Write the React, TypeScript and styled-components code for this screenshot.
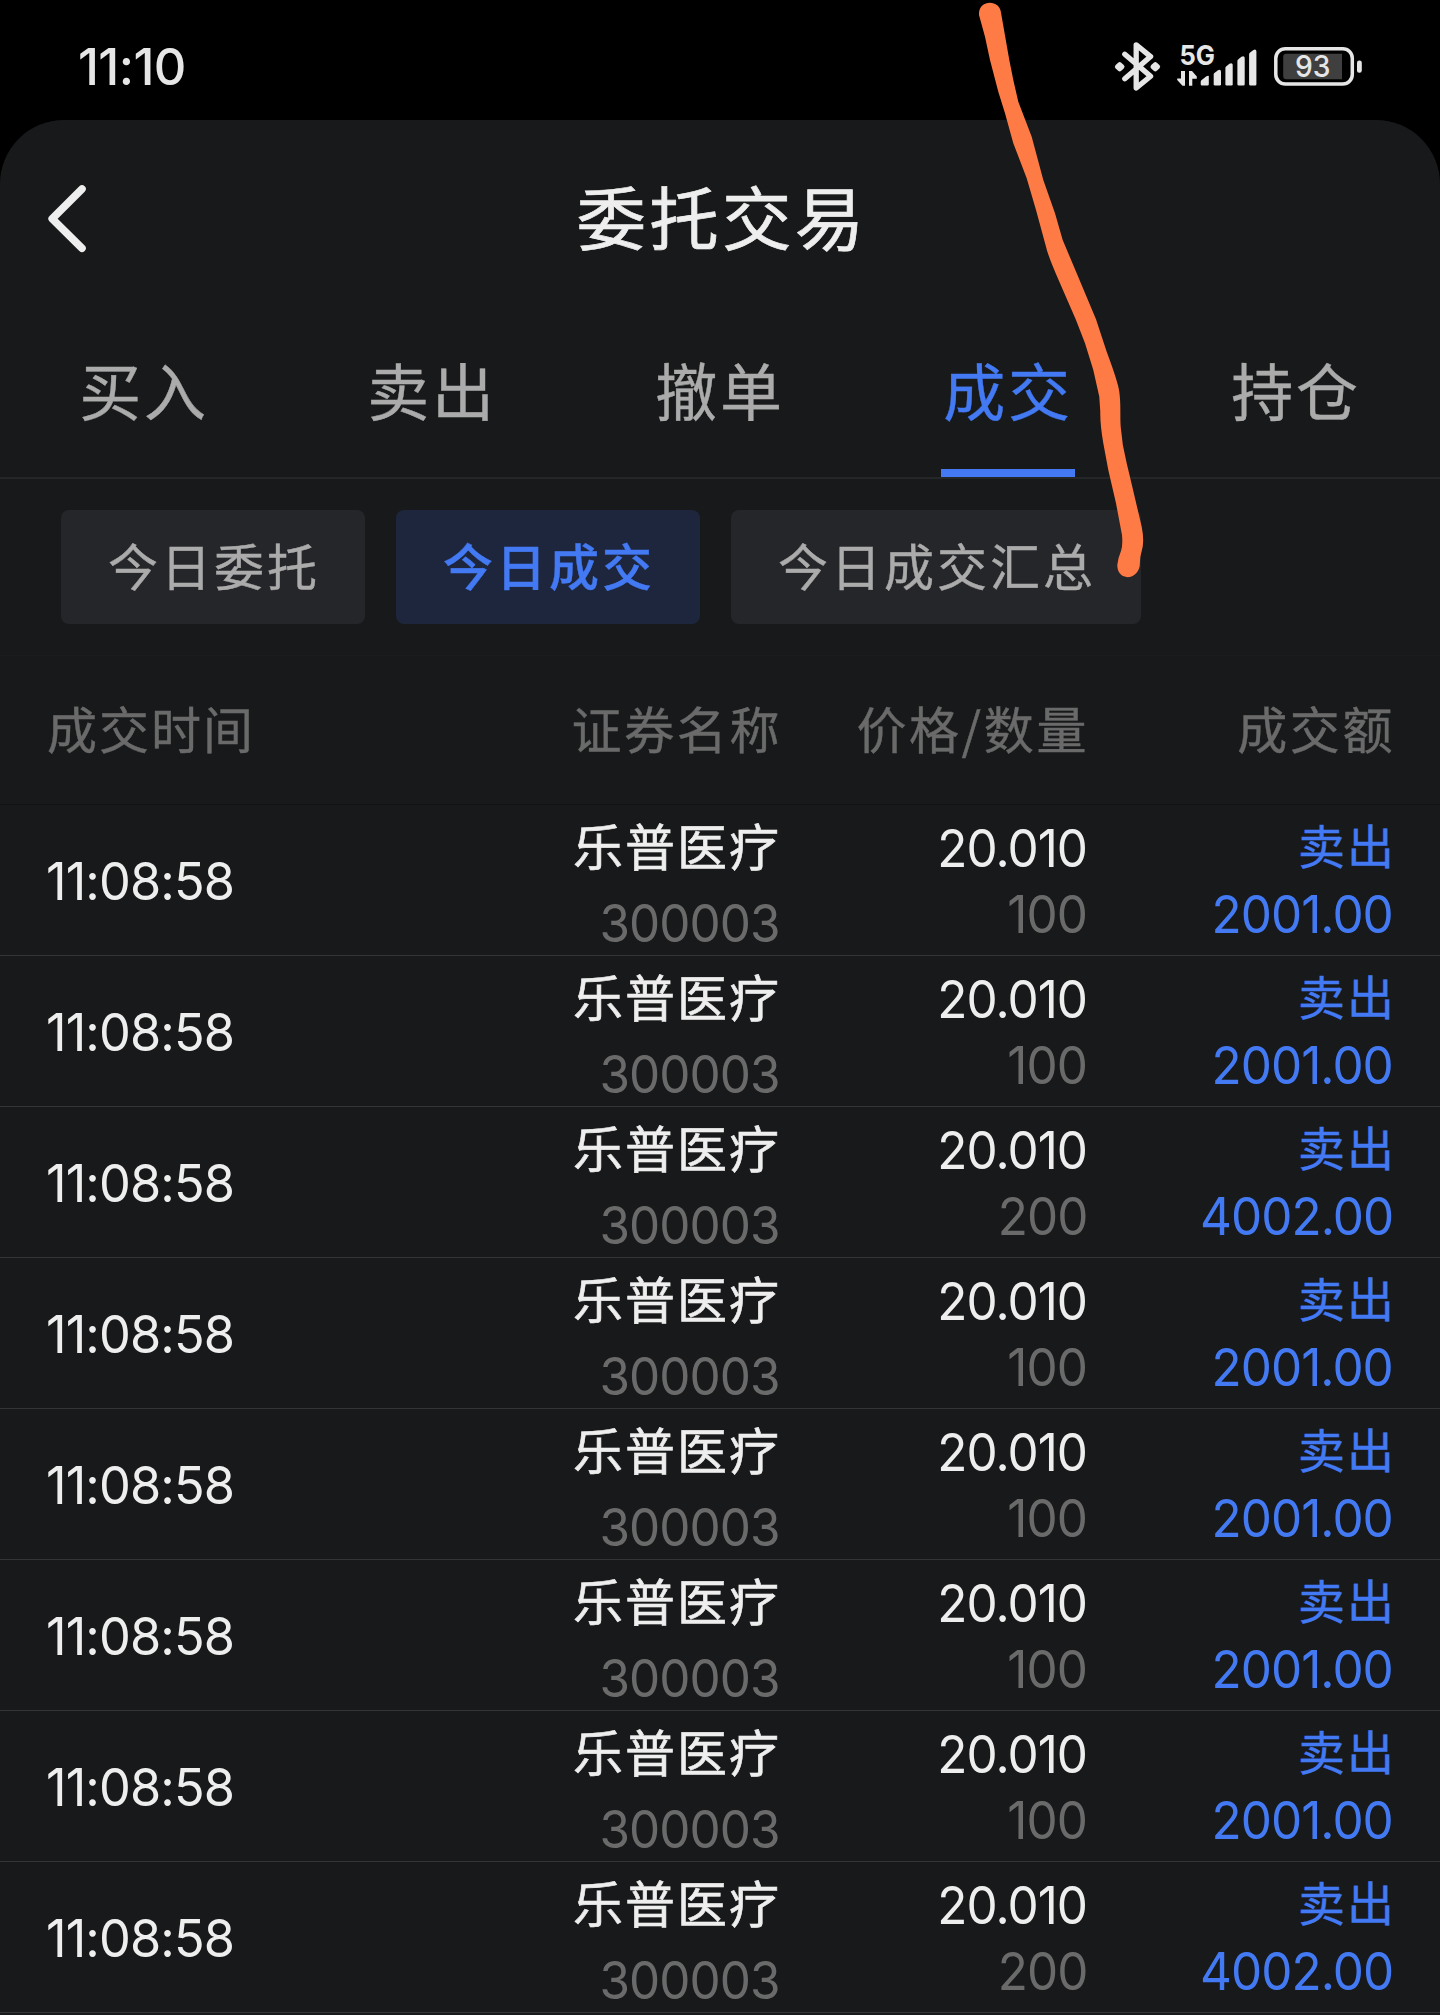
import React from "react";
import styled, { createGlobalStyle, css } from "styled-components";

const colors = {
  sheet: "#17191a",
  text: "#eeeeee",
  status: "#e6e6e6",
  muted: "#ababab",
  dim: "#6a6a6a",
  blue: "#437af3",
  pill: "#252629",
  pillActive: "#1d263d",
  rule: "#343536",
  marker: "#ff7b45",
};

const cjk = `"Noto Sans CJK SC", "Noto Sans", sans-serif`;
const latin = `Inter, "Noto Sans CJK SC", sans-serif`;

const GlobalStyle = createGlobalStyle`
  * { box-sizing: border-box; }
  html, body { margin: 0; padding: 0; background: #000; }
  body { overflow: hidden; }
  button { margin: 0; border: 0; background: none; font: inherit; }
`;

const Screen = styled.div`
  position: relative;
  width: 1440px;
  height: 2015px;
  overflow: hidden;
  background: #000;
  font-family: ${cjk};
  color: ${colors.text};
`;

const StatusBar = styled.header`
  height: 120px;
  padding: 12px 75px 0 78px;
  display: flex;
  align-items: center;
  justify-content: space-between;
`;

const Clock = styled.time`
  padding-top: 2px;
  font: 500 50.5px/60px ${latin};
  letter-spacing: -0.6px;
  color: ${colors.status};
`;

const StatusIcons = styled.svg`
  display: block;
  width: 255px;
  height: 60px;
  font-family: ${latin};
`;

const Sheet = styled.main`
  height: 1895px;
  border-radius: 64px 64px 0 0;
  overflow: hidden;
  background: ${colors.sheet};
`;

const TitleBar = styled.div`
  height: 196px;
  padding: 0 44px;
  display: grid;
  grid-template-columns: 60px 1fr 60px;
  align-items: center;
`;

const BackButton = styled.button`
  width: 48px;
  height: 72px;
  padding: 0;
  svg { display: block; }
`;

const Title = styled.h1`
  margin: 0;
  padding: 0 0 6px 4px;
  text-align: center;
  font-weight: 400;
  font-size: 69.5px;
  line-height: 84px;
  letter-spacing: 3.3px;
  -webkit-text-stroke: 0.7px currentColor;
`;

const TabBar = styled.nav`
  height: 163px;
  display: grid;
  grid-template-columns: repeat(5, 1fr);
  border-bottom: 2px solid #242627;
`;

const Tab = styled.button<{ $active?: boolean }>`
  padding: 35px 0 0;
  display: flex;
  flex-direction: column;
  align-items: center;
  justify-content: space-between;
  font-size: 62px;
  line-height: 76px;
  letter-spacing: 2.8px;
  -webkit-text-stroke: 0.4px currentColor;
  color: ${(p) => (p.$active ? colors.blue : colors.muted)};
  &::after {
    content: "";
    width: 134px;
    height: 8px;
    background: ${(p) => (p.$active ? colors.blue : "transparent")};
  }
`;

const Filters = styled.div`
  height: 177px;
  padding: 31px 61px;
  display: flex;
  gap: 31px;
  border-bottom: 1px solid #1a1c1d;
`;

const Pill = styled.button<{ $active?: boolean }>`
  height: 114px;
  padding: 0 45px 7px 47px;
  border-radius: 8px;
  font-size: 50px;
  line-height: 60px;
  letter-spacing: 3px;
  white-space: nowrap;
  background: ${(p) => (p.$active ? colors.pillActive : colors.pill)};
  color: ${(p) => (p.$active ? colors.blue : colors.muted)};
  font-weight: ${(p) => (p.$active ? 500 : 400)};
  -webkit-text-stroke: 0.4px currentColor;
`;

const columns = css`
  display: grid;
  grid-template-columns: 733px 307px 306px;
  padding: 0 47px;
`;

const TableHead = styled.div`
  ${columns}
  height: 149px;
  align-items: center;
  padding-bottom: 7px;
  border-bottom: 1px solid #101213;
  font-size: 50px;
  line-height: 60px;
  letter-spacing: 2.6px;
  color: ${colors.dim};
  -webkit-text-stroke: 0.4px currentColor;
`;

const FirstHead = styled.div`
  display: flex;
  justify-content: space-between;
`;

const HeadCell = styled.span<{ $end?: boolean }>`
  text-align: ${(p) => (p.$end ? "right" : "left")};
  letter-spacing: ${(p) => (p.$end ? 2.6 : 2)}px;
  margin-right: -2px;
`;

const Row = styled.div`
  ${columns}
  height: 151px;
  border-bottom: 1px solid ${colors.rule};
`;

const FirstCell = styled.div`
  display: flex;
  justify-content: space-between;
`;

const Time = styled.time`
  align-self: center;
  padding-top: 2px;
  margin-left: -1px;
  font: 400 51.5px/60px ${latin};
  letter-spacing: -0.9px;
  transform: scaleX(0.98);
  transform-origin: left;
`;

const Stack = styled.div<{ $top: number; $gap: number }>`
  display: flex;
  flex-direction: column;
  align-items: flex-end;
  padding-top: ${(p) => p.$top}px;
  gap: ${(p) => p.$gap}px;
`;

const Name = styled.span`
  font-size: 50px;
  line-height: 56px;
  letter-spacing: 2px;
  margin-right: -1px;
  -webkit-text-stroke: 0.6px currentColor;
`;

const Side = styled.span`
  font-size: 47px;
  line-height: 56px;
  letter-spacing: 2px;
  margin-right: -3px;
  color: ${colors.blue};
  -webkit-text-stroke: 0.4px currentColor;
`;

const Figure = styled.span<{ $tone: string }>`
  font: 400 51.5px/56px ${latin};
  letter-spacing: -1px;
  transform: scaleX(0.96);
  transform-origin: right;
  color: ${(p) => p.$tone};
`;

const Markup = styled.svg`
  position: absolute;
  left: 970px;
  top: 0;
  pointer-events: none;
`;

const tabs = ["买入", "卖出", "撤单", "成交", "持仓"];
const filters = ["今日委托", "今日成交", "今日成交汇总"];
const trades = [100, 100, 200, 100, 100, 100, 100, 200].map((quantity) => ({
  time: "11:08:58",
  name: "乐普医疗",
  code: "300003",
  price: 20.01,
  quantity,
}));

function DeviceIcons() {
  return (
    <StatusIcons viewBox="1110 36 255 60" fill={colors.status}>
      <path
        d="M1124.8 54.2 1150.6 76.2 1136.2 88V44.8L1150.6 56.6 1124.8 78.8"
        fill="none"
        stroke={colors.status}
        strokeWidth="5.3"
        strokeLinecap="round"
        strokeLinejoin="round"
      />
      <path
        d="M1119.7 64.4 1122.2 66.7 1119.7 69 1117.2 66.7ZM1155.3 64.4 1157.8 66.7 1155.3 69 1152.8 66.7Z"
        stroke={colors.status}
        strokeWidth="4.6"
        strokeLinejoin="round"
      />
      <text x="1179.5" y="64.6" fontSize="27.5" fontWeight="700" textLength="35.5" lengthAdjust="spacingAndGlyphs">5G</text>
      <path d="M1181 71h4v14.7h-2.5L1177.2 80v-1.4H1181ZM1189 71h3l4.8 5.5v2.2h-4.5v7H1189Z" />
      <path d="M1208.8 76v8.2q0 1.3-1.3 1.3h-5.4q-1.4 0-1.4-1.3v-2.3q0-1 1-1.8l4.4-3.6q2-1.3 2.7-.5Z" />
      <path d="M1221 71.4v12.8q0 1.3-1.3 1.3h-4.6q-1.4 0-1.4-1.3v-9.6q0-1 1-1.8l3-2.4q2.9-1.6 3.3 1Z" />
      <path d="M1232.7 64.8v19.4q0 1.3-1.3 1.3h-4.6q-1.4 0-1.4-1.3V68q0-1 1-1.8l3-2.4q2.9-1.6 3.3 1Z" />
      <path d="M1244.7 57.8v26.4q0 1.3-1.3 1.3h-4.6q-1.4 0-1.4-1.3V61q0-1 1-1.8l3-2.4q2.9-1.6 3.3 1Z" />
      <path d="M1256.4 51.2v33q0 1.3-1.3 1.3h-4.6q-1.4 0-1.4-1.3V54.4q0-1 1-1.8l3-2.4q2.9-1.6 3.3 1Z" />
      <path d="M1286.4 53.8H1342V79.2H1286.4q-3.2 0-3.2-3.2V57q0-3.2 3.2-3.2Z" fill="#3f3f3f" />
      <rect x="1275.8" y="48.8" width="76.5" height="35.3" rx="9.5" fill="none" stroke={colors.status} strokeWidth="3.5" />
      <rect x="1357" y="60.6" width="4.8" height="12.2" rx="2.2" />
      <text x="1295" y="77.3" fontSize="30.5" fontWeight="500" textLength="35.5" lengthAdjust="spacingAndGlyphs">93</text>
    </StatusIcons>
  );
}

export default function App() {
  return (
    <>
      <GlobalStyle />
      <Screen>
        <StatusBar>
          <Clock>11:10</Clock>
          <DeviceIcons />
        </StatusBar>
        <Sheet>
          <TitleBar>
            <BackButton aria-label="返回">
              <svg width="48" height="72" viewBox="44 182 48 72">
                <path
                  d="M82 189 52.2 218.7 82 248.3"
                  fill="none"
                  stroke={colors.text}
                  strokeWidth="7.6"
                  strokeLinecap="round"
                  strokeLinejoin="round"
                />
              </svg>
            </BackButton>
            <Title>委托交易</Title>
          </TitleBar>
          <TabBar>
            {tabs.map((label) => (
              <Tab key={label} $active={label === "成交"}>{label}</Tab>
            ))}
          </TabBar>
          <Filters>
            {filters.map((label) => (
              <Pill key={label} $active={label === "今日成交"}>{label}</Pill>
            ))}
          </Filters>
          <TableHead>
            <FirstHead>
              <HeadCell>成交时间</HeadCell>
              <HeadCell $end>证券名称</HeadCell>
            </FirstHead>
            <HeadCell $end>价格/数量</HeadCell>
            <HeadCell $end>成交额</HeadCell>
          </TableHead>
          {trades.map((trade, index) => (
            <Row key={index}>
              <FirstCell>
                <Time>{trade.time}</Time>
                <Stack $top={11} $gap={23}>
                  <Name>{trade.name}</Name>
                  <Figure $tone={colors.dim}>{trade.code}</Figure>
                </Stack>
              </FirstCell>
              <Stack $top={15} $gap={10}>
                <Figure $tone={colors.text}>{trade.price.toFixed(3)}</Figure>
                <Figure $tone={colors.dim}>{trade.quantity}</Figure>
              </Stack>
              <Stack $top={11} $gap={14}>
                <Side>卖出</Side>
                <Figure $tone={colors.blue}>{(trade.price * trade.quantity).toFixed(2)}</Figure>
              </Stack>
            </Row>
          ))}
        </Sheet>
        <Markup width="190" height="600" viewBox="970 0 190 600" fill={colors.marker}>
          <path
            d="M979 15C978 -1 1000 -1 1001 12.7L1009.3 60 1013.3 80 1018.3 101.7 1031.7 136.7 1043.3 180 1055 213.3 1062.7 240 1076.7 273.3 1096 319.3 1106.7 351.7
            Q1118 382 1119.3 391.7C1121 405 1120 415 1120.7 426.7Q1122 445 1126.7 463.3L1130.7 480 1141.7 526.7Q1144 538 1142.7 546.7L1140.3 557 1139.7 566C1137 581 1117 581 1117.3 565
            Q1118 558 1121 551 1123 545 1122 535L1116 503.3 1108.3 470 1103.3 443.3Q1100 424 1100.3 412L1099.3 396.7 1093.3 370 1085 343.3 1076 320 1060 283.3
            Q1048 256 1046 246.7L1036 210 1026.7 178.3 1013.3 143.3 1005 113.3 998.3 91.7 990 60 985 36.7Z"
          />
        </Markup>
      </Screen>
    </>
  );
}
